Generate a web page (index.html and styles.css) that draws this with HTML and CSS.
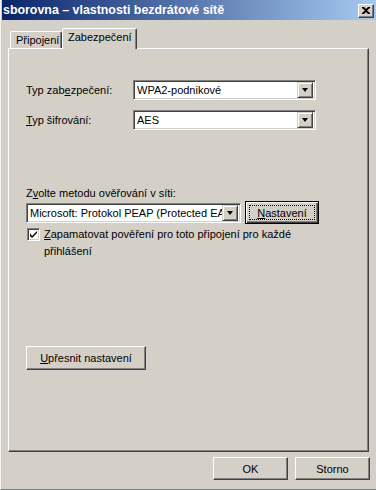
FILE: index.html
```html
<!DOCTYPE html>
<html lang="cs">
<head>
    <meta charset="UTF-8">
    <meta name="viewport" content="width=device-width, initial-scale=1.0">
    <title>sborovna – vlastnosti bezdrátové sítě</title>
    <link rel="stylesheet" href="styles.css">
</head>
<body>
    <div class="window">
        <div class="titlebar">
            <span class="title">sborovna – vlastnosti bezdrátové sítě</span>
            <button class="btn-close">
                <svg width="8" height="7" viewBox="0 0 8 7"><path d="M0 0h2l2 2 2-2h2v1L5 3.5 8 6v1H6L4 5 2 7H0V6l3-2.5L0 1z" fill="#000"/></svg>
            </button>
        </div>

        <!-- Zalozky -->
        <div class="tabs">
            <div class="tab">Připojení</div>
            <div class="tab active">Zabezpečení</div>
        </div>

        <div class="panel">
            <div class="field-row first">
                <label class="field-label">Typ zab<u>e</u>zpečení:</label>
                <div class="combo wide">
                    <span class="combo-value">WPA2-podnikové</span>
                    <span class="combo-arrow"></span>
                </div>
            </div>
            <div class="field-row">
                <label class="field-label"><u>T</u>yp šifrování:</label>
                <div class="combo wide">
                    <span class="combo-value">AES</span>
                    <span class="combo-arrow"></span>
                </div>
            </div>

            <div class="method">
                <label class="method-label">Z<u>v</u>olte metodu ověřování v síti:</label>
                <div class="method-row">
                    <div class="combo narrow">
                        <span class="combo-value">Microsoft: Protokol PEAP (Protected EAP)</span>
                        <span class="combo-arrow"></span>
                    </div>
                    <button class="btn btn-focus"><span class="focus-rect"><u>N</u>astavení</span></button>
                </div>
                <div class="check-row">
                    <span class="checkbox">
                        <svg width="7" height="7" viewBox="0 0 7 7"><path d="M0 2v3l2 2 5-5V0L2 5z" fill="#000"/></svg>
                    </span>
                    <span class="check-text"><u>Z</u>apamatovat pověření pro toto připojení pro každé přihlášení</span>
                </div>
            </div>

            <button class="btn btn-advanced"><u>U</u>přesnit nastavení</button>
        </div>

        <div class="footer">
            <button class="btn btn-dialog">OK</button>
            <button class="btn btn-dialog">Storno</button>
        </div>
    </div>
</body>
</html>
```

FILE: styles.css
```css
body {
    margin: 0;
    padding: 0;
    font-family: "Liberation Sans", Arial, sans-serif;
    font-size: 11px;
    color: #000;
    background-color: #d4d0c8;
}
u {
    text-decoration: underline;
    text-underline-offset: 1px;
}
.window {
    width: 376px;
    height: 490px;
    box-sizing: border-box;
    background-color: #d4d0c8;
    border-left: 1px solid #f4f3f0;
    border-bottom: 1px solid #808080;
    overflow: hidden;
}
.titlebar {
    height: 20px;
    margin-left: 1px;
    padding: 0 2px 0 1px;
    display: flex;
    align-items: center;
    justify-content: space-between;
    background: linear-gradient(to right, #0a246a, #a6caf0);
}
.title {
    color: white;
    font-weight: bold;
    font-size: 12.4px;
    white-space: nowrap;
}
.btn-close {
    width: 16px;
    height: 14px;
    padding: 0;
    margin-top: 1px;
    background: #d4d0c8;
    border: 1px solid;
    border-color: #fff #404040 #404040 #fff;
    box-shadow: inset -1px -1px #808080;
    display: flex;
    align-items: center;
    justify-content: center;
}
.tabs {
    display: flex;
    align-items: flex-end;
    height: 20px;
    margin-top: 8px;
    padding-left: 9px;
}
.tab {
    box-sizing: border-box;
    height: 17px;
    width: 52px;
    padding: 2px 0 0 5px;
    border: 1px solid;
    border-bottom: none;
    border-color: #fff #404040 transparent #fff;
    box-shadow: inset -1px 0 #808080;
    border-radius: 2px 2px 0 0;
    white-space: nowrap;
}
.tab.active {
    position: relative;
    z-index: 1;
    height: 21px;
    width: 75px;
    margin-bottom: -1px;
    padding: 2px 0 0 5px;
    background: #d4d0c8;
}
.panel {
    box-sizing: border-box;
    width: 361px;
    height: 404px;
    margin-left: 7px;
    padding-left: 17px;
    border: 1px solid;
    border-color: #fff #404040 #404040 #fff;
    box-shadow: inset -1px -1px #808080;
}
.field-row {
    display: flex;
    align-items: center;
    margin-top: 10px;
}
.field-row.first {
    margin-top: 31px;
}
.field-label {
    width: 107px;
}
.combo {
    box-sizing: border-box;
    height: 20px;
    display: flex;
    align-items: center;
    justify-content: space-between;
    background: white;
    border: 1px solid;
    border-color: #808080 #fff #fff #808080;
    box-shadow: inset 1px 1px #404040, inset -1px -1px #d4d0c8;
    padding: 2px 2px 2px 3px;
    overflow: hidden;
}
.combo.wide {
    width: 183px;
}
.combo.narrow {
    width: 215px;
}
.combo-value {
    white-space: nowrap;
    overflow: hidden;
    flex: 1;
}
.combo-arrow {
    flex: none;
    width: 16px;
    height: 16px;
    box-sizing: border-box;
    background: #d4d0c8;
    border: 1px solid;
    border-color: #d4d0c8 #404040 #404040 #d4d0c8;
    box-shadow: inset 1px 1px #fff, inset -1px -1px #808080;
    position: relative;
}
.combo-arrow::after {
    content: "";
    position: absolute;
    left: 4px;
    top: 5px;
    border-left: 3.5px solid transparent;
    border-right: 3.5px solid transparent;
    border-top: 4px solid #000;
}
.method {
    margin-top: 57px;
}
.method-label {
    display: block;
    height: 14px;
}
.method-row {
    display: flex;
    align-items: center;
    gap: 4px;
}
.btn {
    font-family: "Liberation Sans", Arial, sans-serif;
    font-size: 11px;
    color: #000;
    background: #d4d0c8;
    border: 1px solid;
    border-color: #fff #404040 #404040 #fff;
    box-shadow: inset -1px -1px #808080;
    padding: 0;
    box-sizing: border-box;
}
.btn-focus {
    width: 74px;
    height: 23px;
    border: 1px solid #000;
    box-shadow: inset 1px 1px #fff, inset -1px -1px #404040, inset -2px -2px #808080;
    padding: 3px;
    display: flex;
}
.focus-rect {
    flex: 1;
    border: 1px dotted #000;
    display: flex;
    align-items: center;
    justify-content: center;
}
.check-row {
    display: flex;
    align-items: flex-start;
    gap: 4px;
    margin-top: 2px;
    padding-left: 1px;
}
.checkbox {
    flex: none;
    width: 13px;
    height: 13px;
    box-sizing: border-box;
    margin-top: 2px;
    background: white;
    border: 1px solid;
    border-color: #808080 #fff #fff #808080;
    box-shadow: inset 1px 1px #404040, inset -1px -1px #d4d0c8;
    display: flex;
    align-items: center;
    justify-content: center;
}
.check-text {
    width: 262px;
    line-height: 17px;
}
.btn-advanced {
    display: block;
    width: 120px;
    height: 24px;
    margin-top: 86px;
}
.footer {
    display: flex;
    justify-content: flex-end;
    gap: 7px;
    padding-right: 6px;
    margin-top: 5px;
}
.btn-dialog {
    width: 75px;
    height: 23px;
}
```
